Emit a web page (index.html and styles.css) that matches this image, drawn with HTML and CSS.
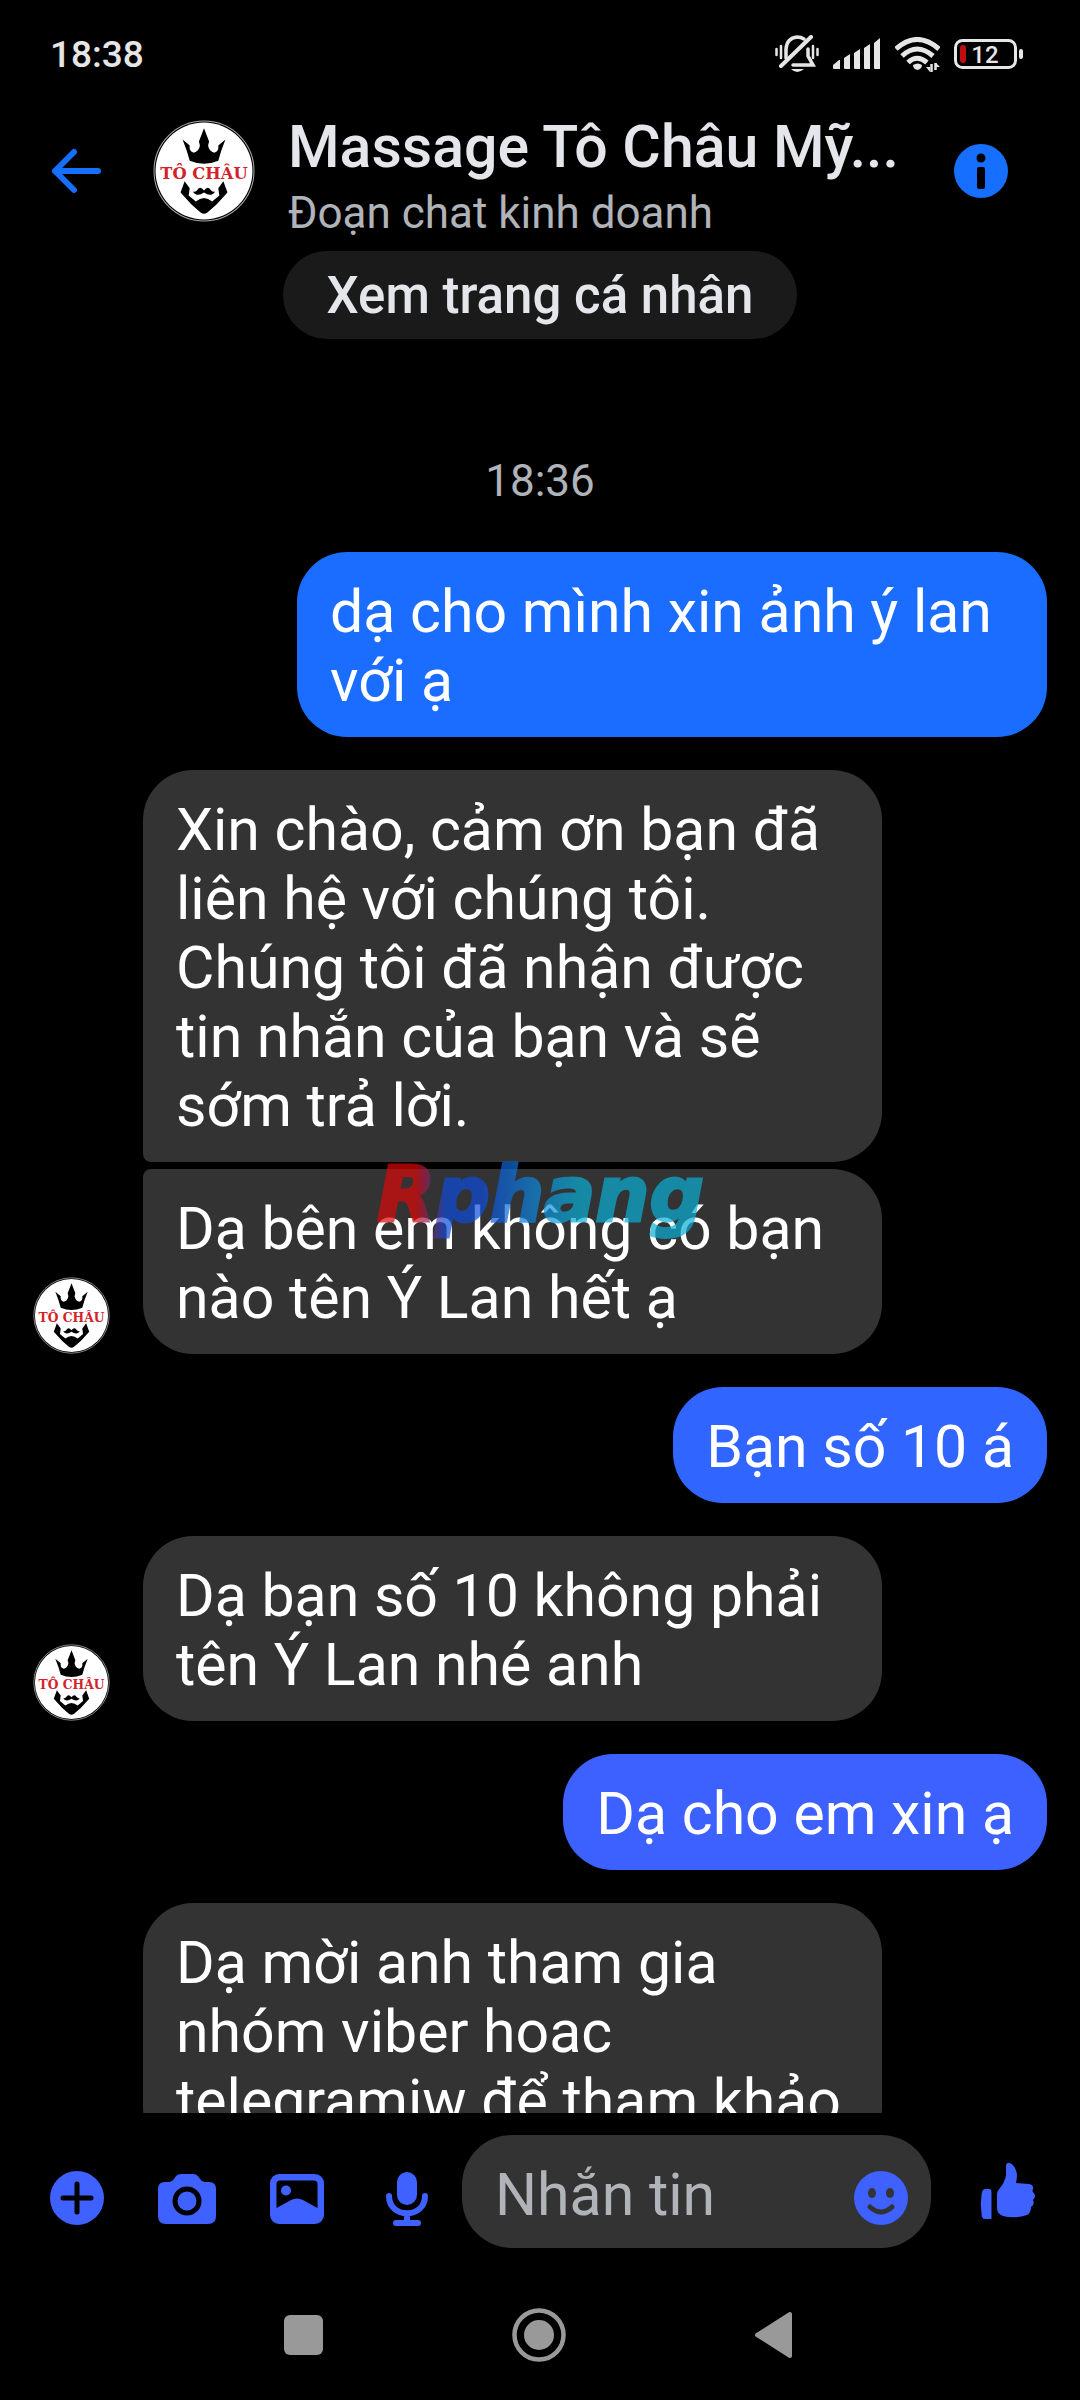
FILE: index.html
```html
<!DOCTYPE html>
<html lang="vi">
<head>
<meta charset="utf-8">
<meta name="viewport" content="width=device-width, initial-scale=1">
<title>Massage Tô Châu Mỹ</title>
<link rel="stylesheet" href="styles.css">
</head>
<body>
<svg class="sprite" aria-hidden="true">
  <symbol id="logo" viewBox="0 0 100 100">
    <circle cx="50" cy="50" r="49" fill="#000" stroke="#aaa" stroke-width="1"/>
    <circle cx="50" cy="50" r="47.5" fill="#fff"/>
    <path d="M50 8 L55 21 L54 25 Q55 31 60 32 Q65 31 64 25 L71 19 L67 30 L64 40 Q50 46 36 40 L33 30 L29 19 L36 25 Q35 31 40 32 Q45 31 46 25 L45 21 Z" fill="#000"/>
    <path d="M31 60 L36 67 L35 74 L42 80 Q50 73 58 80 L65 74 L64 67 L69 60 L73 71 L62 83 L53 91 Q50 93 47 91 L38 83 L27 71 Z" fill="#000"/>
    <path d="M50 69 Q46 64 43 69 Q41 71 39 70 Q43 76 50 71 Q57 76 61 70 Q59 71 57 69 Q54 64 50 69 Z" fill="#000"/>
    <text x="50" y="58" text-anchor="middle" class="logo-text">TÔ CHÂU</text>
  </symbol>
</svg>

<div class="status-bar">
  <span class="clock">18:38</span>
  <div class="status-icons">
    <svg width="44" height="38" viewBox="0 0 44 38" fill="none" stroke="#e6e6e6" stroke-width="3.5" stroke-linecap="round">
      <path d="M11 23 V14 Q12 3 22 2 Q26 2 29 4"/><path d="M33 14 V21 L38 30 H18"/><path d="M36 2 L6 31" stroke-width="4"/>
      <path d="M1.500 14 V20 M6 11 V23 M38 11 V23 M42.500 14 V20" stroke-width="2.500"/>
      <path d="M16 34 H29 Q22 40 16 34 Z" fill="#e6e6e6" stroke="none"/>
    </svg>
    <svg width="48" height="32" viewBox="0 0 48 32" fill="#e6e6e6">
      <path d="M0 27 L6 22 H7 V31 H1 Q0 31 0 30Z M11 20 L17 16 V31 H12 Q11 31 11 30Z M21 15 L27 11 V31 H22 Q21 31 21 30Z M31 10 L37 6 V31 H32 Q31 31 31 30Z M41 5 L47 0 V31 H42 Q41 31 41 30Z"/>
    </svg>
    <svg width="45" height="35" viewBox="0 0 45 35" fill="none" stroke="#e6e6e6" stroke-width="5">
      <path d="M1 12 Q22 -7 44 12 M7 19 Q22 5 38 19 M13 25.500 Q22 17 32 25.500"/>
      <path d="M18 28 Q23 25 27 28 Q27 32 22.500 33 Q18 32 18 28Z" fill="#e6e6e6" stroke="none"/>
      <path d="M36.500 27 V35 M40.500 26 V33" stroke-width="2.500"/><path d="M31 30 H35 V35Z M41 26 L45 30 H41Z" fill="#e6e6e6" stroke="none"/>
    </svg>
    <svg width="69" height="30" viewBox="0 0 69 30">
      <rect x="1.500" y="1.500" width="60" height="27" rx="7" fill="none" stroke="#e6e6e6" stroke-width="3"/>
      <rect x="6" y="6" width="6" height="18" rx="3" fill="#c00d0d"/>
      <rect x="65" y="10" width="4" height="10" rx="2" fill="#e6e6e6"/>
      <text x="31" y="24" text-anchor="middle" class="battery-text">12</text>
    </svg>
  </div>
</div>

<header class="chat-header">
  <button class="back" type="button" aria-label="Quay lại">
    <svg width="52" height="48" viewBox="0 0 52 48" fill="none" stroke="#166fff" stroke-width="6" stroke-linecap="round" stroke-linejoin="round"><path d="M23 5 L4 24 L23 43 M4 24 H47"/></svg>
  </button>
  <svg class="avatar-large" role="img" aria-label="Tô Châu"><use href="#logo"/></svg>
  <div class="heading">
    <h1>Massage Tô Châu Mỹ...</h1>
    <p>Đoạn chat kinh doanh</p>
  </div>
  <button class="info" type="button" aria-label="Thông tin">
    <svg width="56" height="56" viewBox="0 0 56 56"><circle cx="28" cy="28" r="27" fill="#166fff"/><circle cx="28" cy="15" r="4.500"/><rect x="24" y="24" width="8" height="22" rx="2"/></svg>
  </button>
</header>

<main class="messages">
  <button class="profile-button" type="button">Xem trang cá nhân</button>
  <time class="time">18:36</time>
  <div class="row own"><p class="bubble blue-a">dạ cho mình xin ảnh ý lan với ạ</p></div>
  <div class="row">
    <svg class="avatar" role="img" aria-label="Tô Châu"><use href="#logo"/></svg>
    <div class="group">
      <p class="bubble first">Xin chào, cảm ơn bạn đã liên hệ với chúng tôi. Chúng tôi đã nhận được tin nhắn của bạn và sẽ sớm trả lời.</p>
      <p class="bubble last">Dạ bên em không có bạn nào tên Ý Lan hết ạ</p>
      <span class="watermark">Rphang</span>
    </div>
  </div>
  <div class="row own"><p class="bubble blue-b">Bạn số 10 á</p></div>
  <div class="row">
    <svg class="avatar" role="img" aria-label="Tô Châu"><use href="#logo"/></svg>
    <div class="group"><p class="bubble">Dạ bạn số 10 không phải tên Ý Lan nhé anh</p></div>
  </div>
  <div class="row own"><p class="bubble blue-c">Dạ cho em xin ạ</p></div>
  <div class="row continued">
    <div class="group"><p class="bubble">Dạ mời anh tham gia nhóm viber hoac telegramiw để tham khảo</p></div>
  </div>
</main>

<form class="composer">
  <button class="tool" type="button" aria-label="Thêm"><svg width="72" height="72" viewBox="0 0 72 72"><circle cx="36" cy="36" r="27" fill="#3e61ff"/><path d="M36 22 V50 M22 36 H50" stroke="#000" stroke-width="5" stroke-linecap="round"/></svg></button>
  <button class="tool" type="button" aria-label="Máy ảnh"><svg width="72" height="72" viewBox="0 0 72 72"><path d="M14 20 H18 Q21 20 23 17 L25 14 Q27 12 30 12 H42 Q45 12 47 14 L49 17 Q51 20 54 20 H58 Q65 20 65 27 V54 Q65 62 57 62 H15 Q7 62 7 54 V27 Q7 20 14 20Z" fill="#3e61ff"/><circle cx="36" cy="39" r="12" fill="none" stroke="#000" stroke-width="5"/></svg></button>
  <button class="tool" type="button" aria-label="Ảnh"><svg width="72" height="72" viewBox="0 0 72 72"><rect x="9" y="12" width="54" height="50" rx="9" fill="#3e61ff"/><path d="M15.500 46 V22 Q15.500 18.500 19 18.500 H53 Q56.500 18.500 56.500 22 V46 L42 38 Q36 35 30 38Z"/><circle cx="25" cy="28.500" r="5" fill="#3e61ff"/></svg></button>
  <button class="tool" type="button" aria-label="Ghi âm"><svg width="72" height="72" viewBox="0 0 72 72"><rect x="26" y="10" width="20" height="33" rx="10" fill="#3e61ff"/><path d="M18 34 C18 57 54 57 54 34 M36 52 V60 M25 61 H47" fill="none" stroke="#3e61ff" stroke-width="6" stroke-linecap="round"/></svg></button>
  <div class="field">
    <input type="text" placeholder="Nhắn tin" aria-label="Nhắn tin">
    <button class="emoji" type="button" aria-label="Biểu tượng cảm xúc"><svg width="72" height="72" viewBox="0 0 72 72"><circle cx="36" cy="36" r="27" fill="#3e61ff"/><ellipse cx="27" cy="31" rx="4" ry="5" fill="#333"/><ellipse cx="45" cy="31" rx="4" ry="5" fill="#333"/><path d="M25 45 Q36 55 47 45" fill="none" stroke="#333" stroke-width="5" stroke-linecap="round"/></svg></button>
  </div>
  <button class="tool like" type="button" aria-label="Thích"><svg width="72" height="72" viewBox="0 0 72 72" fill="#3e61ff"><path d="M13 27 H17 Q19.500 27 19.500 30 V57 H13 Q9.500 57 9.500 51 Q8 42 9.500 33 Q10 27 13 27Z"/><path d="M34 3 Q35 0 38 1 Q43 3 45 12 Q45 17 44 21 L57 22 Q62 23 61 27 Q60 29 61 30 Q65 34 61 38 Q63 43 59 45 Q59 51 55 53 Q42 57 31 54 Q25 52 25 46 V32 Q25 29 28 26 Q33 20 34 13 Z"/></svg></button>
</form>

<nav class="system-nav">
  <button type="button" aria-label="Gần đây"><svg width="56" height="56" viewBox="0 0 56 56" fill="#999"><rect x="7" y="8" width="39" height="40" rx="6"/></svg></button>
  <button type="button" aria-label="Trang chủ"><svg width="56" height="56" viewBox="0 0 56 56" fill="#999"><circle cx="27" cy="28" r="24.500" fill="none" stroke="#999" stroke-width="4.500"/><circle cx="27" cy="28" r="15"/></svg></button>
  <button type="button" aria-label="Trở lại"><svg width="56" height="56" viewBox="0 0 56 56" fill="#999" stroke="#999" stroke-width="4" stroke-linejoin="round"><path d="M10 28 L43 7 V49Z"/></svg></button>
</nav>
</body>
</html>
```
FILE: styles.css
```css
* {
  box-sizing: border-box;
}

body {
  margin: 0;
  height: 100vh;
  display: flex;
  flex-direction: column;
  background: #000;
  color: #fff;
  font-family: Roboto, "Noto Sans", sans-serif;
}

h1,
p {
  margin: 0;
  font-weight: 400;
}

button,
input {
  margin: 0;
  padding: 0;
  border: 0;
  background: none;
  font: inherit;
}

svg {
  display: block;
  flex-shrink: 0;
}

.sprite {
  position: absolute;
  width: 0;
  height: 0;
}

.logo-text {
  font: bold 16px "DejaVu Serif", serif;
  fill: #d2232a;
}

/* Status bar */
.status-bar {
  display: flex;
  align-items: center;
  justify-content: space-between;
  height: 108px;
  padding: 0 57px 0 50px;
}

.clock {
  padding-top: 2px;
  font-size: 37px;
  font-weight: 500;
  line-height: 44px;
  color: #e6e6e6;
}

.status-icons {
  display: flex;
  align-items: center;
  gap: 14px;
}

.battery-text {
  font: 500 24px Roboto, sans-serif;
  fill: #e6e6e6;
}

/* Chat header */
.chat-header {
  display: flex;
  align-items: center;
  height: 126px;
  padding: 0 71px 0 51px;
}

.avatar-large {
  width: 102px;
  height: 102px;
  margin: 0 33px 0 50px;
}

.heading {
  flex: 1;
  min-width: 0;
  padding-top: 14px;
  white-space: nowrap;
}

.heading h1 {
  font-size: 59px;
  font-weight: 500;
  line-height: 70px;
  color: #e4e6eb;
}

.heading p {
  font-size: 44px;
  line-height: 62px;
  color: #b0b3b8;
}

/* Conversation */
.messages {
  flex: 1;
  min-height: 0;
  display: flex;
  flex-direction: column;
  gap: 33px;
  padding: 17px 33px 0;
  overflow: hidden;
}

.messages > * {
  flex-shrink: 0;
}

.profile-button {
  align-self: center;
  height: 88px;
  padding: 0 44px;
  border-radius: 44px;
  background: #1a1a1a;
  color: #e4e6eb;
  font-size: 51px;
  font-weight: 500;
}

.time {
  padding: 82px 0 11px;
  text-align: center;
  font-size: 44px;
  line-height: 54px;
  color: #b0b3b8;
}

.row {
  display: flex;
  align-items: flex-end;
  gap: 33px;
}

.own {
  justify-content: flex-end;
}

.continued {
  padding-left: 110px;
}

.avatar {
  width: 77px;
  height: 77px;
}

.group {
  position: relative;
  display: flex;
  flex-direction: column;
  gap: 7px;
  max-width: 739px;
}

.bubble {
  padding: 25px 33px 22px;
  border-radius: 50px;
  background: #333;
  font-size: 59px;
  line-height: 69px;
}

.own .bubble {
  max-width: 750px;
}

.blue-a {
  background: #1a6dff;
}

.blue-b {
  background: #3165ff;
}

.blue-c {
  background: #3c61ff;
}

.first {
  border-bottom-left-radius: 8px;
}

.last {
  border-top-left-radius: 8px;
}

.watermark {
  position: absolute;
  top: 380px;
  left: 234px;
  font: italic bold 76px/90px "DejaVu Sans", sans-serif;
  color: transparent;
  -webkit-text-stroke: 3px transparent;
  background: linear-gradient(90deg, #dc0707 12%, #0e4bdc 21%, #0e4bdc 32%, #0e87dc 48%, #0aafd6 62%);
  background-clip: text;
  -webkit-background-clip: text;
  opacity: 0.7;
}

/* Composer */
.composer {
  display: flex;
  align-items: center;
  padding: 22px 17px 22px 22px;
}

.tool {
  display: flex;
  justify-content: center;
  width: 110px;
  padding-top: 12px;
}

.like {
  margin-left: 22px;
}

.field {
  flex: 1;
  min-width: 0;
  display: flex;
  align-items: center;
  height: 113px;
  padding: 0 14px 0 33px;
  border-radius: 50px;
  background: #333;
}

.field input {
  flex: 1;
  min-width: 0;
  height: 80px;
  padding-top: 5px;
  color: #fff;
  font-size: 59px;
  outline: 0;
}

.field input::placeholder {
  color: #b0b3b8;
  opacity: 1;
}

.emoji {
  padding-top: 12px;
}

/* System navigation */
.system-nav {
  display: flex;
  align-items: center;
  justify-content: center;
  gap: 179px;
  height: 130px;
}
```
